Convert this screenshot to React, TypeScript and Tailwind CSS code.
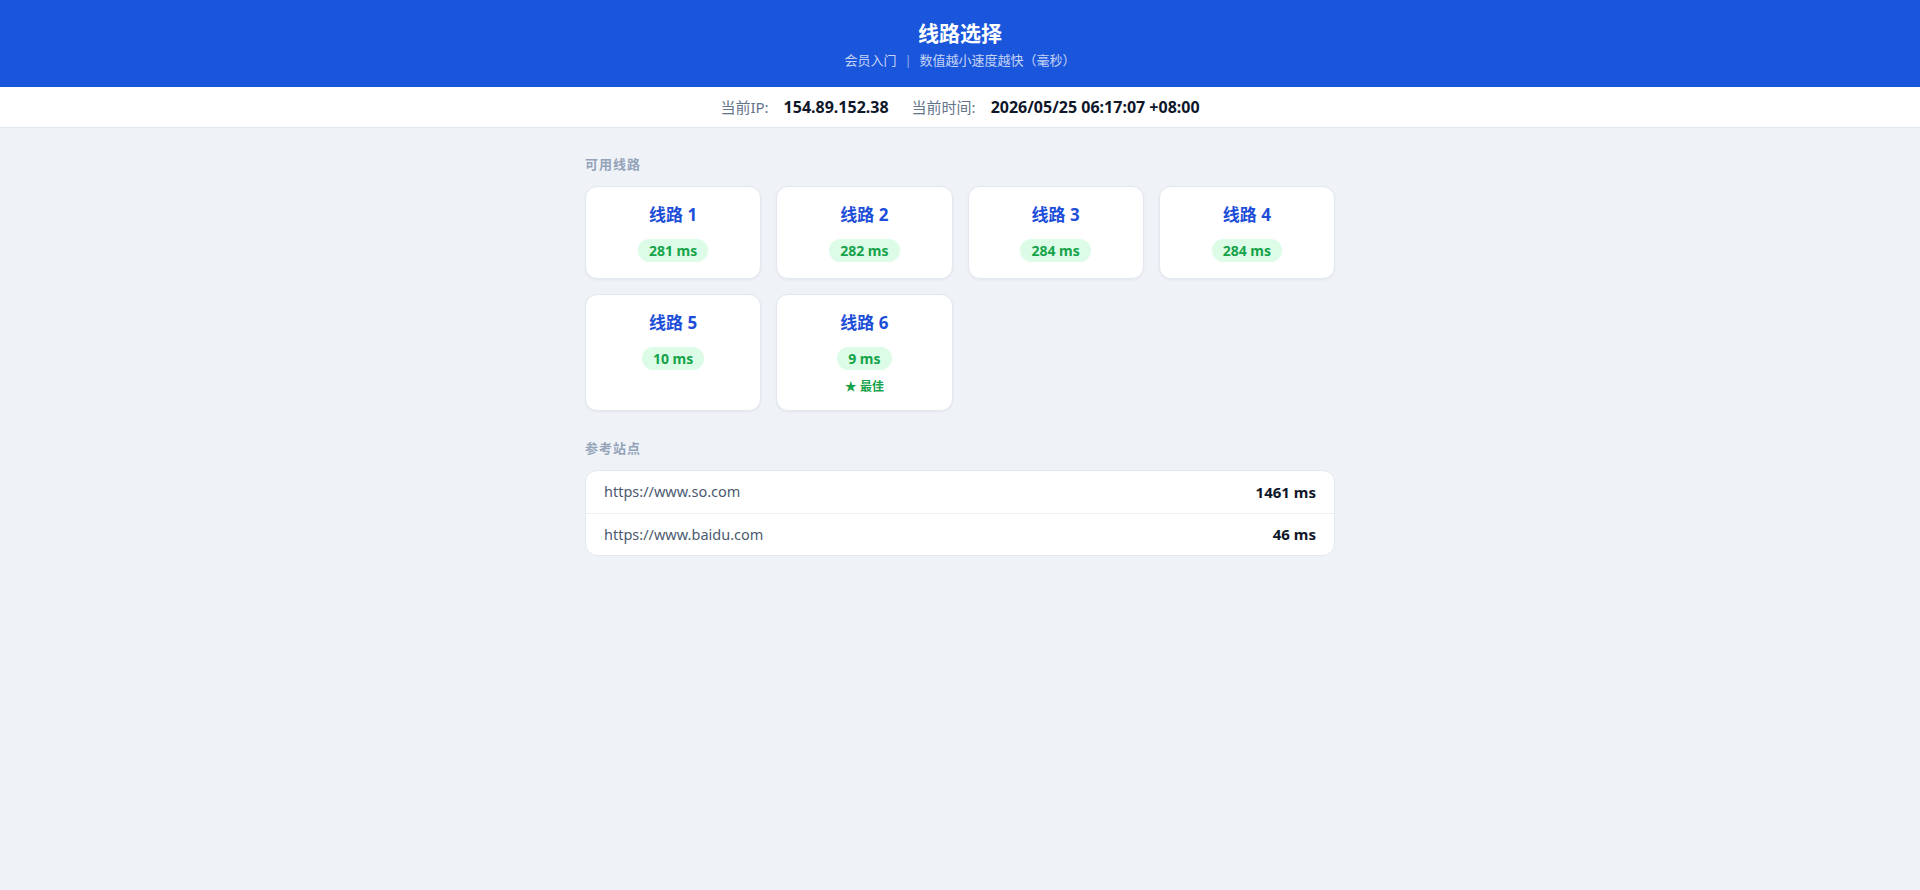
import React from 'react'

// Route picker page: header, current IP/time bar, line cards and reference sites.

type Line = { name: string; ms: number; best?: boolean }

const LINES: Line[] = [
  { name: '线路 1', ms: 281 },
  { name: '线路 2', ms: 282 },
  { name: '线路 3', ms: 284 },
  { name: '线路 4', ms: 284 },
  { name: '线路 5', ms: 10 },
  { name: '线路 6', ms: 9, best: true },
]

const SITES = [
  { url: 'https://www.so.com', ms: 1461 },
  { url: 'https://www.baidu.com', ms: 46 },
]

const FONT = '"Noto Sans", "Noto Sans CJK SC", sans-serif'

export default function App() {
  return (
    <div className="min-h-[890px] bg-[#eff3f8]" style={{ fontFamily: FONT }}>
      {/* ── Header ─────────────────────────────── */}
      <header className="bg-[#1a56db] pt-[19px] pb-[17px] text-center">
        <h1 className="text-[21px] leading-[28px] font-bold text-white">线路选择</h1>
        <p className="mt-[3px] text-[13px] leading-[20px] text-white/75">
          会员入门
          <span className="mx-[8px] text-white/50">|</span>
          数值越小速度越快（毫秒）
        </p>
      </header>

      {/* ── Current IP / time ──────────────────── */}
      <div className="flex h-[41px] items-center justify-center gap-[23px] border-b border-[#e2e8f0] bg-white">
        <InfoItem label="当前IP:" value="154.89.152.38" />
        <InfoItem label="当前时间:" value="2026/05/25 06:17:07 +08:00" />
      </div>

      <main className="mx-auto w-[750px] pt-[27px]">
        <SectionLabel>可用线路</SectionLabel>
        <div className="grid grid-cols-4 gap-[15px]">
          {LINES.map(line => (
            <LineCard key={line.name} line={line} />
          ))}
        </div>

        <div className="mt-[28px]">
          <SectionLabel>参考站点</SectionLabel>
          <div className="overflow-hidden rounded-xl border border-[#e3e8ef] bg-white">
            {SITES.map((site, i) => (
              <div
                key={site.url}
                className={
                  'flex h-[42px] items-center justify-between px-[18px] ' +
                  (i > 0 ? 'border-t border-[#edf1f6]' : '')
                }
              >
                <span className="text-[14.5px] text-[#4b5a70]">{site.url}</span>
                <span className="text-[15px] font-bold text-[#0f172a]">{site.ms} ms</span>
              </div>
            ))}
          </div>
        </div>
      </main>
    </div>
  )
}

function InfoItem({ label, value }: { label: string; value: string }) {
  return (
    <div className="flex items-center gap-[15px]">
      <span className="text-[15px] text-[#64748b]">{label}</span>
      <span className="text-[16px] font-bold text-[#0f172a]">{value}</span>
    </div>
  )
}

function SectionLabel({ children }: { children: React.ReactNode }) {
  return (
    <div className="mb-[13px] text-[13px] leading-[18px] font-bold tracking-[1px] text-[#94a3b8]">
      {children}
    </div>
  )
}

function LineCard({ line }: { line: Line }) {
  return (
    <div className="flex flex-col items-center rounded-xl border border-[#e3e8ef] bg-white pt-[17px] pb-[16px] shadow-[0_1px_3px_rgba(15,23,42,0.05)]">
      <div className="text-[17px] leading-[22px] font-bold text-[#1d4ed8]">{line.name}</div>
      <div className="mt-[13px] flex h-[23px] items-center rounded-full bg-[#dcfce7] px-[11px] text-[14px] font-bold text-[#16a34a]">
        {line.ms} ms
      </div>
      {line.best && (
        <div className="mt-[10px] text-[12px] leading-[14px] font-bold text-[#16a34a]">★ 最佳</div>
      )}
    </div>
  )
}
